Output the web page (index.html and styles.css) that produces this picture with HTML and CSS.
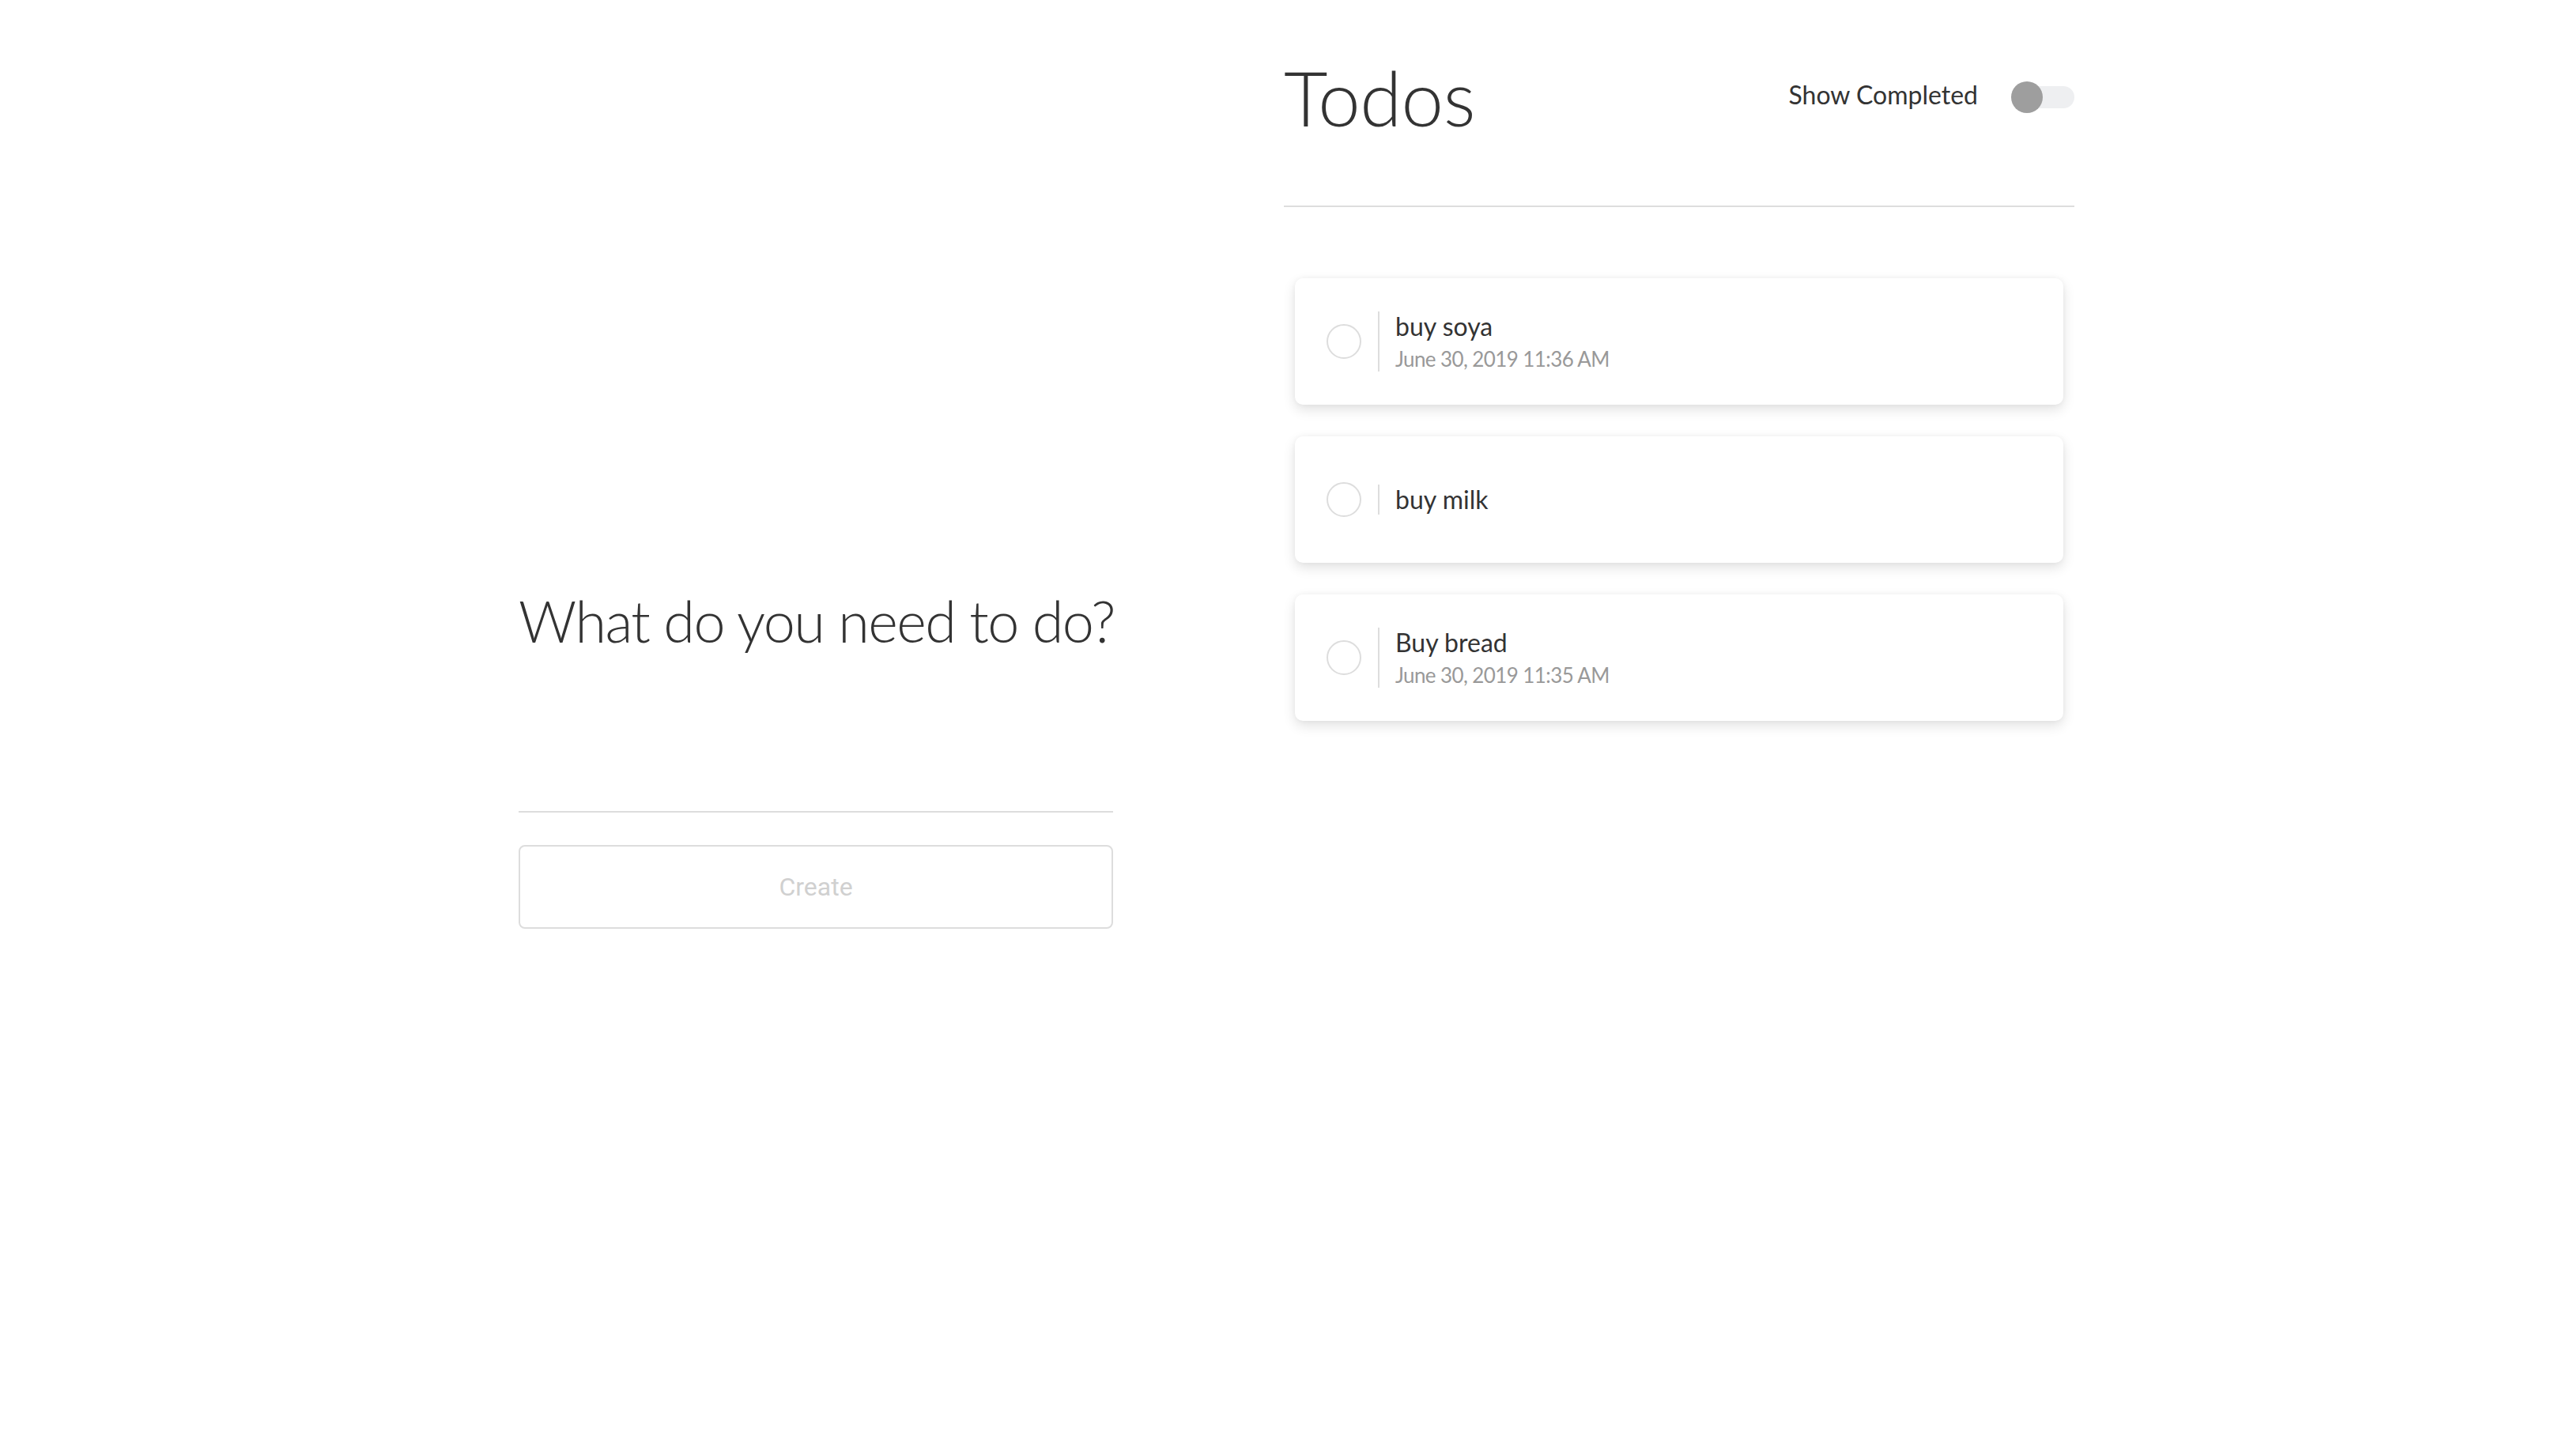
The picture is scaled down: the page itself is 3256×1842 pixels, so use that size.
FILE: index.html
```html
<!DOCTYPE html>
<html lang="en">
<head>
<meta charset="utf-8">
<title>Todos</title>
<link rel="stylesheet" href="styles.css">
</head>
<body>
<div class="app">
  <section class="composer">
    <h2 class="composer-title">What do you need to do?</h2>
    <input class="composer-input" type="text" aria-label="Todo">
    <button class="composer-button" type="button">Create</button>
  </section>
  <section class="todos">
    <header class="todos-header">
      <h1 class="todos-title">Todos</h1>
      <div class="toggle-group">
        <span class="toggle-label">Show Completed</span>
        <span class="switch"><span class="switch-track"></span><span class="switch-thumb"></span></span>
      </div>
    </header>
    <ul class="todo-list">
      <li class="todo-card">
        <span class="todo-check"></span>
        <div class="todo-body">
          <div class="todo-text">buy soya</div>
          <div class="todo-date">June 30, 2019 11:36 AM</div>
        </div>
      </li>
      <li class="todo-card">
        <span class="todo-check"></span>
        <div class="todo-body">
          <div class="todo-text">buy milk</div>
        </div>
      </li>
      <li class="todo-card">
        <span class="todo-check"></span>
        <div class="todo-body">
          <div class="todo-text">Buy bread</div>
          <div class="todo-date">June 30, 2019 11:35 AM</div>
        </div>
      </li>
    </ul>
  </section>
</div>
</body>
</html>
```

FILE: styles.css
```css
html, body {
  margin: 0;
  padding: 0;
  background: #ffffff;
}

body {
  font-family: "Lato", "Noto Sans", sans-serif;
  color: #333333;
}

.app {
  display: flex;
  align-items: flex-start;
  gap: 216px;
  padding-left: 656px;
}

/* Left column */
.composer {
  width: 752px;
  display: flex;
  flex-direction: column;
  padding-top: 742px;
}

.composer-title {
  margin: 0 0 140px 0;
  font-size: 72px;
  font-weight: 300;
  line-height: 86px;
  letter-spacing: -1.6px;
  color: #333333;
  white-space: nowrap;
}

.composer-input {
  box-sizing: border-box;
  width: 100%;
  height: 60px;
  margin: 0;
  padding: 0;
  border: none;
  border-bottom: 2px solid #dddddd;
  outline: none;
  font-family: "Lato", sans-serif;
  font-size: 32px;
  background: transparent;
}

.composer-button {
  box-sizing: border-box;
  width: 100%;
  height: 106px;
  margin-top: 41px;
  border: 2px solid #dddddd;
  border-radius: 8px;
  background: #ffffff;
  font-family: "Roboto", "Liberation Sans", sans-serif;
  font-size: 32px;
  color: #d0d0d0;
  padding: 0;
}

/* Right column */
.todos {
  width: 1000px;
}

.todos-header {
  display: flex;
  align-items: center;
  justify-content: space-between;
  margin-top: 65px;
  padding-bottom: 79px;
  border-bottom: 2px solid #dddddd;
}

.todos-title {
  margin: 0;
  font-size: 96px;
  font-weight: 300;
  line-height: 116px;
  letter-spacing: -0.5px;
  color: #333333;
}

.toggle-group {
  display: flex;
  align-items: center;
}

.toggle-label {
  font-size: 32px;
  line-height: 40px;
  margin-right: 42px;
  margin-bottom: 7px;
  color: #333333;
}

.switch {
  position: relative;
  display: block;
  width: 80px;
  height: 40px;
}

.switch-track {
  position: absolute;
  left: 8px;
  top: 6px;
  width: 72px;
  height: 28px;
  border-radius: 14px;
  background: #eeeff1;
}

.switch-thumb {
  position: absolute;
  left: 0;
  top: 0;
  width: 40px;
  height: 40px;
  border-radius: 50%;
  background: #9e9e9e;
}

.todo-list {
  list-style: none;
  margin: 90px 14px 0 14px;
  padding: 0;
  display: flex;
  flex-direction: column;
  gap: 40px;
}

.todo-card {
  box-sizing: border-box;
  height: 160px;
  display: flex;
  align-items: center;
  padding-left: 40px;
  background: #ffffff;
  border-radius: 10px;
  box-shadow: 0 6px 16px rgba(0, 0, 0, 0.12), 0 0 6px rgba(0, 0, 0, 0.04);
}

.todo-check {
  box-sizing: border-box;
  width: 44px;
  height: 44px;
  border: 2px solid #dddddd;
  border-radius: 50%;
  flex: none;
  margin-right: 21px;
}

.todo-body {
  border-left: 2px solid #dddddd;
  padding-left: 20px;
}

.todo-text {
  font-size: 32px;
  line-height: 38.4px;
  color: #333333;
}

.todo-date {
  margin-top: 7px;
  font-size: 26px;
  line-height: 31.2px;
  letter-spacing: -0.6px;
  color: #999999;
}
```
